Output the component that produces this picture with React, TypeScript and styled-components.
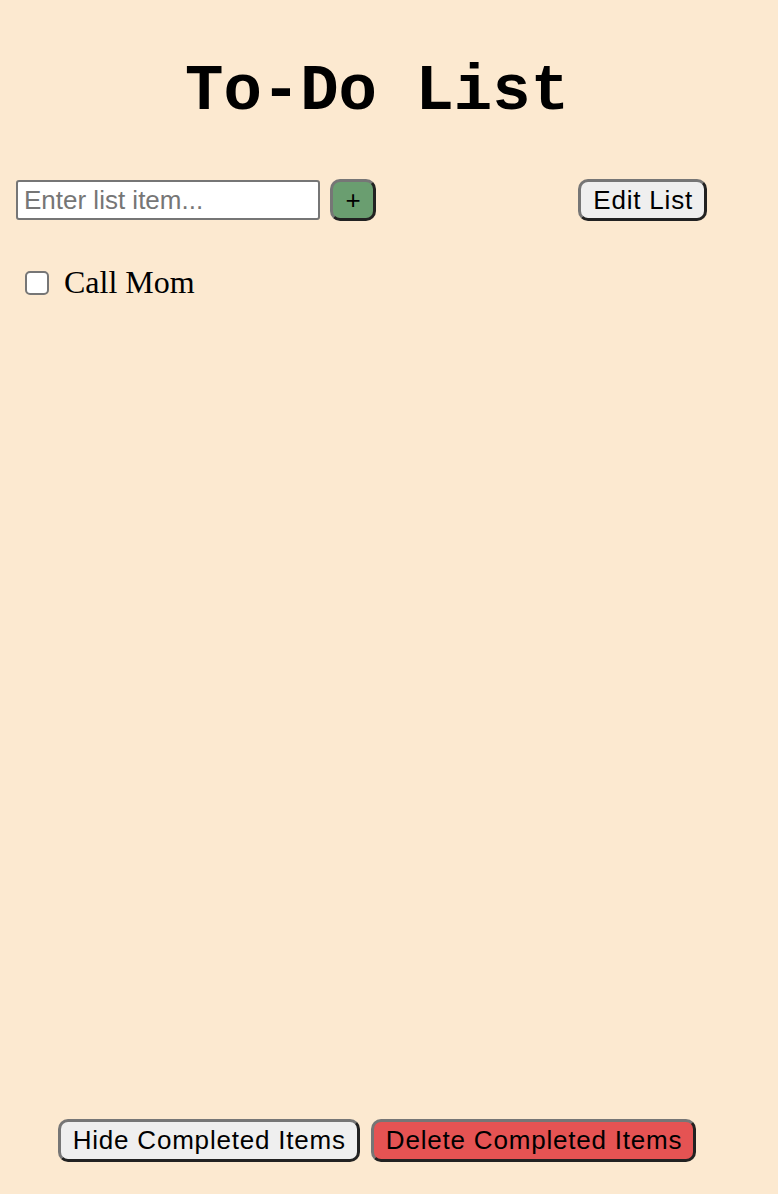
import styled, { createGlobalStyle, css } from 'styled-components';

const GlobalStyle = createGlobalStyle`
  html, body {
    margin: 0;
    padding: 0;
    background: #fce9d0;
  }
`;

const Page = styled.div`
  width: 754px;
  min-height: 100vh;
  display: flex;
  flex-direction: column;
  box-sizing: border-box;
  padding: 0 0 32px 16px;
`;

const Title = styled.h1`
  margin: 60px 0 55px;
  text-align: center;
  font-family: 'Liberation Mono', 'Courier New', monospace;
  font-weight: bold;
  font-size: 64px;
  line-height: 64px;
  padding-right: 16px;
`;

const Toolbar = styled.div`
  display: flex;
  align-items: center;
  gap: 10px;
  padding-right: 47px;
`;

const ItemInput = styled.input`
  width: 304px;
  height: 40px;
  box-sizing: border-box;
  border: 2px solid #767676;
  border-radius: 3px;
  padding: 0 6px;
  font-family: 'Liberation Sans', Arial, sans-serif;
  font-size: 26px;
  background: #fff;
  &::placeholder {
    color: #767676;
  }
`;

const Button = styled.button<{ $tone?: 'green' | 'red' }>`
  height: 42px;
  box-sizing: border-box;
  border: 3px solid;
  border-color: #767676 #222 #222 #767676;
  border-radius: 10px;
  padding: 0 11px 0 12px;
  font-family: 'Liberation Sans', Arial, sans-serif;
  font-size: 26px;
  letter-spacing: 0.8px;
  color: #000;
  background: #efefef;
  ${(p) =>
    p.$tone === 'green' &&
    css`
      background: #6a9e70;
      width: 46px;
      padding: 0;
      letter-spacing: 0;
    `}
  ${(p) =>
    p.$tone === 'red' &&
    css`
      background: #e55353;
    `}
`;

const Spacer = styled.div`
  flex: 1;
`;

const List = styled.ul`
  list-style: none;
  margin: 43px 0 0;
  padding: 0 0 0 9px;
`;

const Item = styled.li`
  display: flex;
  align-items: center;
  gap: 15px;
  font-family: 'Liberation Serif', 'Times New Roman', serif;
  font-size: 32px;
`;

const Check = styled.input`
  appearance: none;
  width: 24px;
  height: 24px;
  margin: 0;
  box-sizing: border-box;
  border: 2px solid #767676;
  border-radius: 5px;
  background: #fff;
`;

const Footer = styled.div`
  margin-top: auto;
  display: flex;
  justify-content: center;
  gap: 11px;
  padding-right: 16px;
  & > button {
    height: 43px;
  }
`;

export default function App() {
  return (
    <>
      <GlobalStyle />
      <Page>
        <Title>To-Do List</Title>
        <Toolbar>
          <ItemInput placeholder="Enter list item..." />
          <Button $tone="green">+</Button>
          <Spacer />
          <Button>Edit List</Button>
        </Toolbar>
        <List>
          <Item>
            <Check type="checkbox" />
            <span>Call Mom</span>
          </Item>
        </List>
        <Footer>
          <Button>Hide Completed Items</Button>
          <Button $tone="red">Delete Completed Items</Button>
        </Footer>
      </Page>
    </>
  );
}
